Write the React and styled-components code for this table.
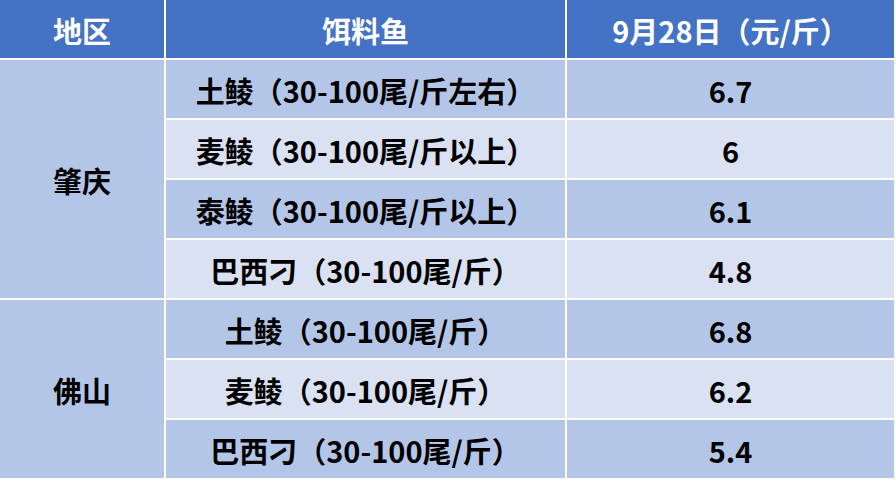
import styled, { createGlobalStyle } from "styled-components"

const GlobalStyle = createGlobalStyle`
  html, body {
    margin: 0;
    padding: 0;
    background: #FFFFFF;
  }
`

const Table = styled.div`
  display: grid;
  grid-template-columns: 164px 399px 327px;
  grid-template-rows: 58px repeat(7, 58px);
  gap: 2px;
  width: 896px;
  height: 481px;
  background-color: #FFFFFF;
  font-family: "Noto Sans CJK SC", "Noto Sans", sans-serif;
  font-weight: 700;
  font-size: 29px;
`

const Cell = styled.div`
  display: flex;
  align-items: center;
  justify-content: center;
  white-space: nowrap;
  color: ${props => props.head ? "#FFFFFF" : "#000000"};
  background-color: ${props =>
    props.head ? "#4472C4" : props.light ? "#D9E1F2" : "#B4C6E7"};
  grid-row: ${props => props.span ? `span ${props.span}` : "auto"};
  padding-top: 1px;
`

const rows = [
  { region: "肇庆", span: 4, name: "土鲮（30-100尾/斤左右）", price: "6.7" },
  { name: "麦鲮（30-100尾/斤以上）", price: "6" },
  { name: "泰鲮（30-100尾/斤以上）", price: "6.1" },
  { name: "巴西刁（30-100尾/斤）", price: "4.8" },
  { region: "佛山", span: 3, name: "土鲮（30-100尾/斤）", price: "6.8" },
  { name: "麦鲮（30-100尾/斤）", price: "6.2" },
  { name: "巴西刁（30-100尾/斤）", price: "5.4" },
]

export default function App() {
  return (
    <>
      <GlobalStyle />
      <Table>
        <Cell head>地区</Cell>
        <Cell head>饵料鱼</Cell>
        <Cell head>9月28日（元/斤）</Cell>
        {rows.map((row, i) => (
          <>
            {row.region && <Cell key={"r" + i} span={row.span}>{row.region}</Cell>}
            <Cell key={"n" + i} light={i % 2 === 1}>{row.name}</Cell>
            <Cell key={"p" + i} light={i % 2 === 1}>{row.price}</Cell>
          </>
        ))}
      </Table>
    </>
  )
}
